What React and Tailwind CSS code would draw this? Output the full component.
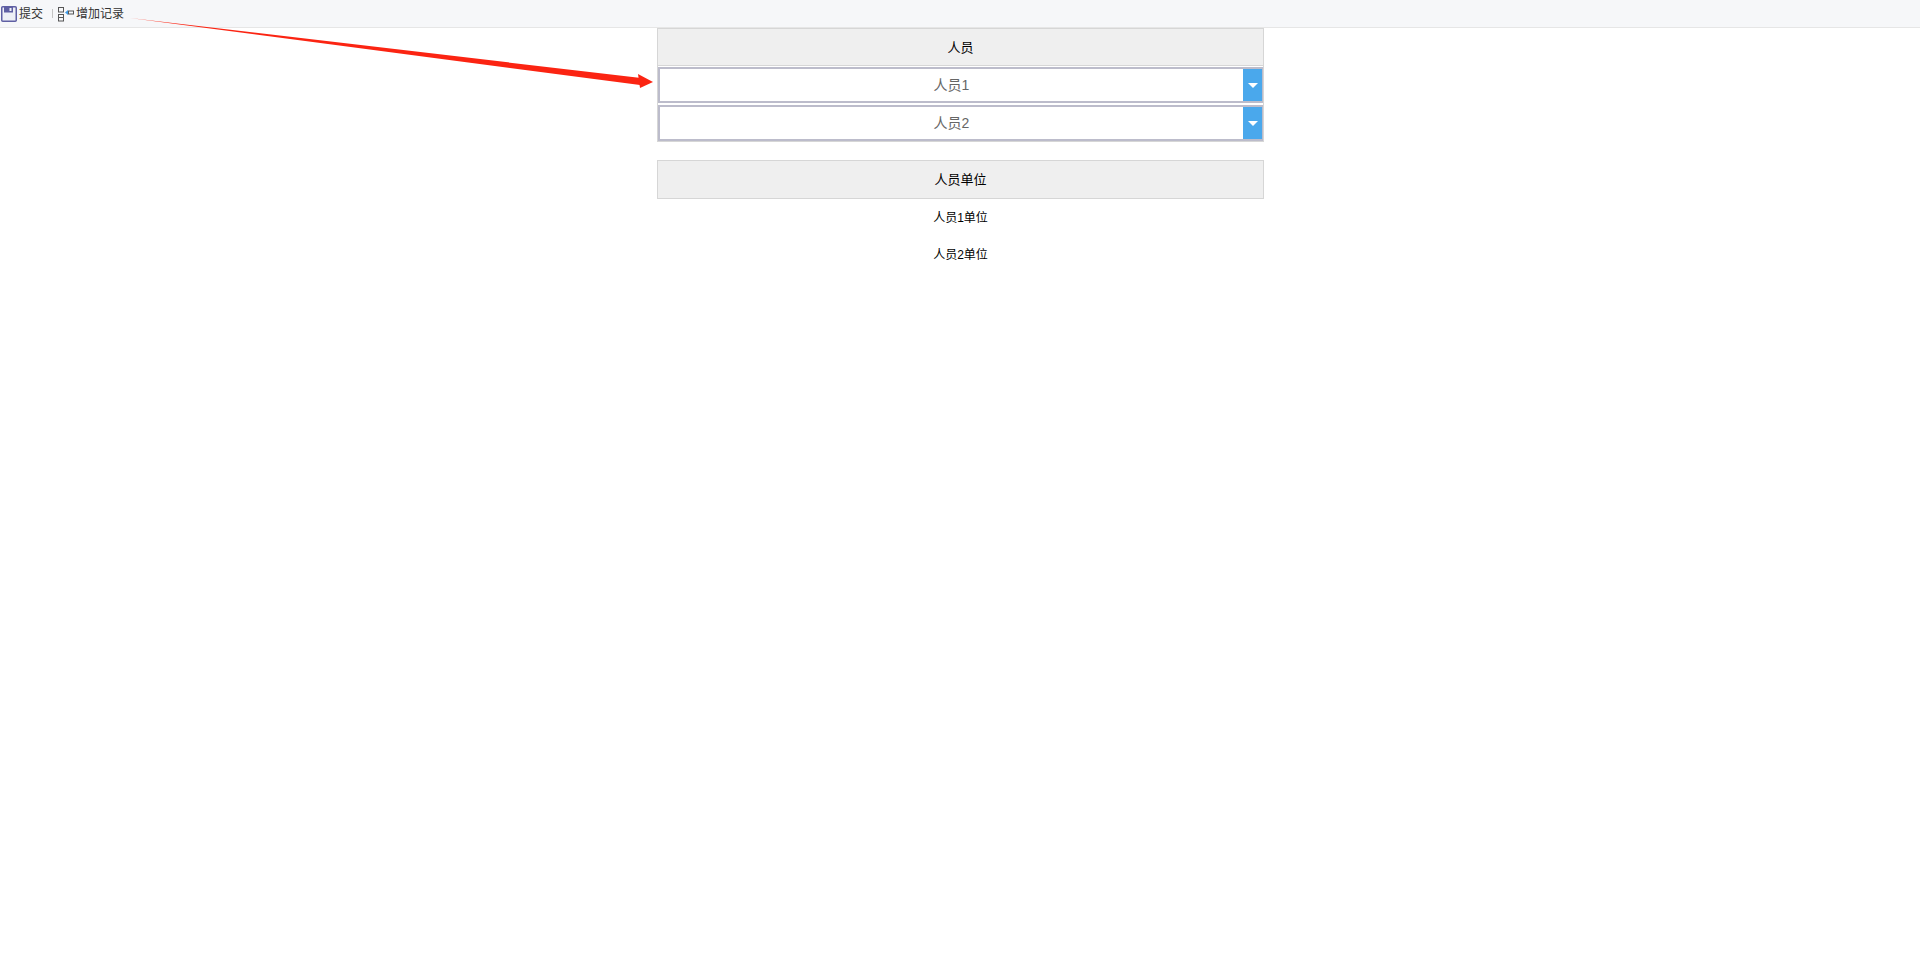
const font = { fontFamily: '"Liberation Sans", "Noto Sans CJK SC", sans-serif' };

function SaveIcon() {
  return (
    <svg width="16" height="16" viewBox="0 0 16 16" className="shrink-0">
      <rect x="0.75" y="0.75" width="14.5" height="14.5" rx="1" fill="#eef0f6" stroke="#5f5fa3" strokeWidth="1.5" />
      <rect x="3" y="1" width="9" height="5.5" fill="#5f5fa3" />
      <rect x="8.5" y="2" width="2" height="3" fill="#eef0f6" />
    </svg>
  );
}

function AddRecordIcon() {
  return (
    <svg width="16" height="16" viewBox="0 0 16 16" className="shrink-0">
      <rect x="0.5" y="1.5" width="5" height="4.5" fill="none" stroke="#555" />
      <rect x="0.5" y="8.5" width="5" height="6.5" fill="none" stroke="#555" />
      <path d="M1 11.5h4" stroke="#555" />
      <path d="M7 6.5l3-2.5v5z" fill="#3f9be8" />
      <rect x="10.5" y="5" width="5" height="3" fill="none" stroke="#555" />
    </svg>
  );
}

function SelectRow({ label }) {
  return (
    <div className="flex h-[36px] border-2 border-r border-[#bcbccb] bg-white">
      <div className="flex-1 flex items-center justify-center text-[14px] text-[#666]">{label}</div>
      <div className="w-[19px] bg-[#4aa8ec] flex items-center justify-center">
        <div className="w-0 h-0 border-l-[5px] border-r-[5px] border-t-[5px] border-l-transparent border-r-transparent border-t-white" />
      </div>
    </div>
  );
}

export default function App() {
  return (
    <div className="relative min-h-[953px] bg-white" style={font}>
      {/* barra de herramientas */}
      <div className="h-[28px] flex items-center pl-px bg-[#f6f7f9] border-b border-[#e6e6e6] text-[12px] text-[#333]">
        <SaveIcon />
        <span className="ml-[2px]">提交</span>
        <div className="w-px h-[9px] bg-[#c4c4c4] ml-[9px] mr-[5px]" />
        <AddRecordIcon />
        <span className="ml-[2px]">增加记录</span>
      </div>

      <div className="w-[607px] ml-[657px]">
        <div className="h-[38px] pt-px flex items-center justify-center bg-[#efefef] border border-[#d6d6d6] text-[13px] text-black">
          人员
        </div>
        <div className="border-x border-b border-[#d6d6d6] flex flex-col gap-[2px] pt-px">
          <SelectRow label="人员1" />
          <SelectRow label="人员2" />
        </div>

        <div className="mt-[18px]">
          <div className="h-[39px] flex items-center justify-center bg-[#efefef] border border-[#d6d6d6] text-[13px] text-black">
            人员单位
          </div>
          <div className="h-[38px] flex items-center justify-center text-[12px] text-black">人员1单位</div>
          <div className="h-[38px] -mt-px flex items-center justify-center text-[12px] text-black">人员2单位</div>
        </div>
      </div>

      {/* flecha de anotación */}
      <svg className="absolute left-0 top-0 pointer-events-none" width="700" height="100">
        <polygon points="130,18 641,78 640,85" fill="#fb2412" />
        <polygon points="653,82 638,74 640,88" fill="#fb2412" />
      </svg>
    </div>
  );
}
